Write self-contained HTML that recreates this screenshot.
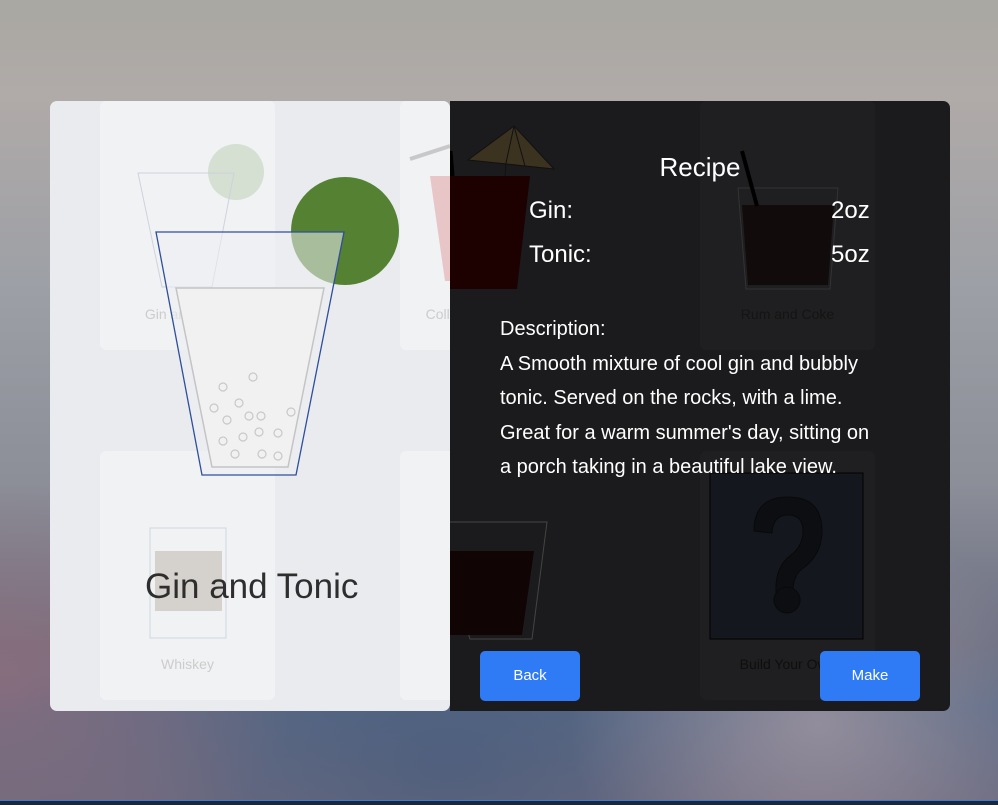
<!DOCTYPE html>
<html><head><meta charset="utf-8"><style>
html,body{margin:0;padding:0}
body{width:998px;height:804px;overflow:hidden;position:relative;font-family:"Liberation Sans",sans-serif;
background:linear-gradient(180deg,#a9a8a2 0%,#b0aaa8 12%,#9da0a6 35%,#8c8e98 60%,#6b6f82 80%,#5a6a86 88%,#6a6a80 100%);}
.bgl{position:absolute;inset:0;background:radial-gradient(ellipse 300px 200px at 0% 85%,rgba(160,110,120,.6),transparent),radial-gradient(ellipse 250px 200px at 82% 90%,rgba(190,170,175,.55),transparent),radial-gradient(ellipse 300px 200px at 45% 95%,rgba(60,85,120,.5),transparent)}
.p{position:absolute;top:101px;height:610px;border-radius:7px;overflow:hidden}
.left{left:50px;width:400px;background:#e9ebef}
.right{left:450px;width:500px;background:#1b1b1d;border-radius:0 7px 7px 0}
.card{position:absolute;width:175px;height:249px;border-radius:6px}
.left .card{background:#f1f2f4}
.right .card{background:#1f1f21}
.lbl{position:absolute;width:100%;text-align:center;font-size:14px;top:205px}
.w{position:absolute;color:#fff}
.btn{position:absolute;top:550px;width:100px;height:50px;background:#2f7bf6;border-radius:5px;color:#fff;font-size:15px;text-align:center;line-height:50px}
.bar{position:absolute;left:0;top:800px;width:998px;height:4px;background:#1b2838;border-top:1px solid #3a7bd5}
</style></head><body>
<div class="bgl"></div>
<div class="p left">
  <div class="card" style="left:50px;top:0"><div class="lbl" style="color:#ccc">Gin and Tonic</div></div>
  <div class="card" style="left:350px;top:0"><div class="lbl" style="color:#ccc">College Long Island</div></div>
  <div class="card" style="left:50px;top:350px"><div class="lbl" style="color:#ccc;top:205px">Whiskey</div></div>
  <div class="card" style="left:350px;top:350px"></div>
  <svg width="400" height="610" style="position:absolute;left:0;top:0">
    <circle cx="186" cy="71" r="28" fill="#d5dfd2"/>
    <polygon points="88,72 184,72 162,186 112,186" fill="none" stroke="#cdd2dc" stroke-width="1"/>
    <rect x="100" y="427" width="76" height="110" fill="none" stroke="#cfd6e2"/>
    <rect x="105" y="450" width="67" height="60" fill="#d5d1cd"/>
    <path d="M360 58 L400 45" stroke="#c8c8c8" stroke-width="4"/>
    <polygon points="380,75 400,75 400,180 395,180" fill="#e8c6c8"/>
    <circle cx="295" cy="130" r="54" fill="#548232"/>
    <polygon points="106,131 294,131 246,374 152,374" fill="rgba(236,238,242,.55)" stroke="#2d4f9a" stroke-width="1.3"/>
    <polygon points="126,187 274,187 238,366 162,366" fill="#f1f1f2" stroke="#c4c4c4" stroke-width="1.5"/>
    <g fill="none" stroke="#c8c8c8" stroke-width="1.2">
      <circle cx="203" cy="276" r="4"/><circle cx="173" cy="286" r="4"/><circle cx="164" cy="307" r="4"/><circle cx="189" cy="302" r="4"/><circle cx="199" cy="315" r="4"/><circle cx="211" cy="315" r="4"/><circle cx="241" cy="311" r="4"/><circle cx="177" cy="319" r="4"/><circle cx="173" cy="340" r="4"/><circle cx="193" cy="336" r="4"/><circle cx="209" cy="331" r="4"/><circle cx="228" cy="332" r="4"/><circle cx="185" cy="353" r="4"/><circle cx="212" cy="353" r="4"/><circle cx="228" cy="355" r="4"/>
    </g>
  </svg>
  <div style="position:absolute;left:95px;top:466px;font-size:35px;color:#2e2e2e">Gin and Tonic</div>
</div>
<div class="p right">
  <div class="card" style="left:250px;top:0"><div class="lbl" style="color:#141414;left:0">Rum and Coke</div></div>
  <div class="card" style="left:250px;top:350px"><div class="lbl" style="color:#0e0e0e">Build Your Own</div></div>
  <svg width="500" height="610" style="position:absolute;left:0;top:0">
    <polygon points="0,75 80,75 67,188 0,188" fill="#1d0000"/>
    <path d="M0 50 L2 75" stroke="#000" stroke-width="5"/>
    <polygon points="18,59 64,25 104,68" fill="#3c3220" stroke="#111"/>
    <path d="M64 25 L56 62 M64 25 L75 65 M55 75 L56 62" stroke="#111"/>
    <polygon points="288,87 388,87 380,188 296,188" fill="none" stroke="#333"/>
    <polygon points="292,104 384,104 378,184 298,184" fill="#120b0b"/>
    <path d="M292 50 L307 105" stroke="#000" stroke-width="4"/>
    <polygon points="-15,421 97,421 82,538 20,538" fill="none" stroke="#444"/>
    <polygon points="0,450 84,450 72,534 0,534" fill="#100404"/>
    <rect x="260" y="372" width="153" height="166" fill="#14171d" stroke="#000"/>
    <path d="M304 430 q0 -34 34 -34 q34 0 34 34 q0 24 -20 38 q-9 7 -9 22 v7 h-17 v-10 q0 -22 15 -33 q12 -9 12 -24 q0 -16 -15 -16 q-15 0 -16 18 z" fill="#0c0e12" stroke="#08090c"/>
    <circle cx="337" cy="499" r="13" fill="#0c0e12" stroke="#08090c"/>
  </svg>
  <div class="w" style="left:0;width:500px;text-align:center;top:51px;font-size:26px">Recipe</div>
  <div class="w" style="left:79px;top:96px;font-size:24px">Gin:</div>
  <div class="w" style="left:381px;top:96px;font-size:24px">2oz</div>
  <div class="w" style="left:79px;top:140px;font-size:24px">Tonic:</div>
  <div class="w" style="left:381px;top:140px;font-size:24px">5oz</div>
  <div class="w" style="left:50px;top:211px;font-size:20px;line-height:34.6px;width:420px">Description:<br>A Smooth mixture of cool gin and bubbly<br>tonic. Served on the rocks, with a lime.<br>Great for a warm summer's day, sitting on<br>a porch taking in a beautiful lake view.</div>
  <div class="btn" style="left:30px">Back</div>
  <div class="btn" style="left:370px">Make</div>
</div>
<div class="bar"></div>
</body></html>
